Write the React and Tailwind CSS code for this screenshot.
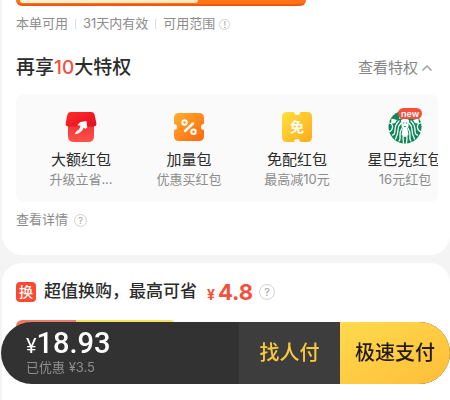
import React from 'react';

const RedPacketIcon = () => (
  <svg viewBox="0 0 34 34" className="size-[34px]" aria-hidden="true">
    <defs>
      <linearGradient id="packetBody" x1="0" y1="0" x2="0" y2="1">
        <stop offset="0" stopColor="#f5343a" />
        <stop offset="1" stopColor="#ff5248" />
      </linearGradient>
      <linearGradient id="packetLid" x1="0" y1="0" x2="1" y2="1">
        <stop offset="0" stopColor="#ff2c27" />
        <stop offset="1" stopColor="#e30d20" />
      </linearGradient>
    </defs>
    <path d="M4 15h26v11q0 6-6 6H10q-6 0-6-6z" fill="url(#packetBody)" />
    <path d="M7 2h20q3 0 3.700 3l1.600 8q.5 3.500-3 3.500H4.700q-3.500 0-3-3.500l1.600-8Q4 2 7 2z" fill="url(#packetLid)" />
    <path d="M10.500 24.300l2-3q3.500-2 4-5.500l-3.200-.6 3-3.200 6.200-1 .8 6.500-2.300 1.500-1-1.700q-2.500 6.500-9.500 7z" fill="#fff" />
  </svg>
);

const PercentIcon = () => (
  <svg viewBox="0 0 34 34" className="size-[34px]" aria-hidden="true">
    <defs>
      <linearGradient id="percentFill" x1="0" y1="0" x2="1" y2="1">
        <stop offset="0" stopColor="#ffb02b" />
        <stop offset="1" stopColor="#ff650f" />
      </linearGradient>
    </defs>
    <path d="M7 3h20q5 0 5 5v6a3 3 0 0 0 0 6v6q0 5-5 5H7q-5 0-5-5v-6a3 3 0 0 0 0-6V8q0-5 5-5z" fill="url(#percentFill)" />
    <g fill="none" stroke="#fff" strokeWidth="2" strokeLinecap="round">
      <circle cx="12.500" cy="12.500" r="2.200" />
      <circle cx="21.500" cy="21.700" r="2.200" />
      <path d="M21 13.500l-8 7.500" strokeWidth="2.400" />
    </g>
  </svg>
);

const FreeIcon = () => (
  <span className="relative flex size-[34px] items-center justify-center">
    <svg viewBox="0 0 34 34" className="absolute inset-0" aria-hidden="true">
      <defs>
        <linearGradient id="freeFill" x1="0" y1="0" x2="1" y2="1">
          <stop offset="0" stopColor="#ffe13d" />
          <stop offset="1" stopColor="#ffaa1c" />
        </linearGradient>
      </defs>
      <path d="M7 2h7a3 3 0 0 0 6 0h7q5 0 5 5v20q0 5-5 5h-7a3 3 0 0 0-6 0H7q-5 0-5-5V7q0-5 5-5z" fill="url(#freeFill)" />
    </svg>
    <span className="relative text-sm font-bold leading-none text-white">免</span>
  </span>
);

const StarbucksIcon = () => (
  <span className="relative block size-[34px]">
    <svg viewBox="0 0 34 34" className="size-[34px]" aria-hidden="true">
      <circle cx="17" cy="17" r="16.500" fill="#0d8757" />
      <g fill="none" stroke="#fff" strokeWidth="1.300" strokeLinecap="round">
        <path d="M13 13q-3 3-3 7t-2.500 9M11 11q-4 4-4 9t-2.500 5M14 18q-2.500 4-2 8t-1 5" />
        <path d="M21 13q3 3 3 7t2.500 9M23 11q4 4 4 9t2.500 5M20 18q2.500 4 2 8t1 5" />
        <path d="M1.500 13q3.500 1 3 4.500t-3 4M32.500 13q-3.500 1-3 4.500t3 4" />
        <path d="M15.500 24q-1 4 0 9M18.500 24q1 4 0 9" />
      </g>
      <path d="M13 10q4-3 8 0l-.5 6q-1.500 4-3.500 4t-3.500-4z" fill="#fff" />
      <path d="M14.500 19h5l1 6-3.500 2-3.500-2z" fill="#fff" />
      <path d="M11 9l1-4 3 2 2-4 2 4 3-2 1 4q-6-3-12 0z" fill="#fff" />
      <path d="M3.500 8.500l5.500 1.500-2 3-4 1zM30.500 8.500l-5.500 1.500 2 3 4 1z" fill="#fff" />
      <path d="M14.800 13h1.500M17.800 13h1.500M16 16.500h2" stroke="#0d8757" strokeWidth=".9" />
    </svg>
    <span className="absolute -top-0.5 left-2.5 rounded-full bg-[#f4503c] px-[3px] font-['Inter',sans-serif] text-[9px] font-semibold leading-[11px] text-white">
      new
    </span>
  </span>
);

const HintIcon = ({ mark, label, className }) => (
  <button
    type="button"
    aria-label={label}
    className={`flex items-center justify-center rounded-full border border-[#d2d2d2] leading-none text-[#a0a0a0] ${className}`}
  >
    {mark}
  </button>
);

const perks = [
  { title: '大额红包', desc: '升级立省...', Icon: RedPacketIcon },
  { title: '加量包', desc: '优惠买红包', Icon: PercentIcon },
  { title: '免配红包', desc: '最高减10元', Icon: FreeIcon },
  { title: '星巴克红包', desc: '16元红包', Icon: StarbucksIcon },
];

const MemberCard = () => (
  <section className="rounded-b-[20px] bg-white pb-[25px] pl-3.5 pr-3">
    <div className="h-1.5 w-[290px] overflow-hidden rounded-b-md border-b-2 border-[#f2570a] bg-[#ff7416] pl-1">
      <div className="h-[3px] w-[178px] rounded-b-sm bg-gradient-to-r from-[#fff3d9] to-[#ffe7c2]" />
    </div>
    <div className="mt-2 flex h-5 items-center text-[13px] text-[#8c8c8c]">
      <span>本单可用</span>
      <span className="mx-[7px] h-2.5 w-px bg-[#dcdcdc]" />
      <span>31天内有效</span>
      <span className="mx-[7px] h-2.5 w-px bg-[#dcdcdc]" />
      <span>可用范围</span>
      <HintIcon mark="!" label="可用范围说明" className="ml-1 size-[11px] text-[9px]" />
    </div>
    <div className="mt-5 flex h-7 items-center justify-between">
      <h2 className="text-[19px] font-medium text-[#2b2b2b]">
        再享<span className="text-[#f4503c]">10</span>大特权
      </h2>
      <button type="button" className="flex items-center gap-[3px] pr-[5px] text-[15px] text-[#858585]">
        查看特权
        <svg viewBox="0 0 12 8" className="h-2 w-3" fill="none" stroke="#a0a0a0" strokeWidth="1.500" aria-hidden="true">
          <path d="M1.500 6.500L6 2l4.500 4.500" />
        </svg>
      </button>
    </div>
    <ul className="mt-3 flex h-[108px] overflow-hidden rounded-lg bg-[#fafafa] pl-[11px] pt-4">
      {perks.map(({ title, desc, Icon }) => (
        <li key={title} className="flex w-[108px] shrink-0 flex-col items-center whitespace-nowrap">
          <Icon />
          <span className="mt-1.5 text-[15px] leading-5 text-[#2b2b2b]">{title}</span>
          <span className="text-[13px] leading-[18px] text-[#8c8c8c]">{desc}</span>
        </li>
      ))}
    </ul>
    <div className="mt-2 flex h-5 items-center text-[13px] text-[#8c8c8c]">
      查看详情
      <HintIcon mark="?" label="特权详情说明" className="ml-1.5 size-[13px] text-[9px]" />
    </div>
  </section>
);

const SwapCard = () => (
  <section className="mt-2 grow rounded-t-[20px] bg-white px-3.5 pt-[15px]">
    <div className="flex h-7 items-center">
      <span className="flex size-5 items-center justify-center rounded bg-[#fa4b32] text-sm font-medium leading-none text-white">
        换
      </span>
      <h2 className="ml-2 text-[17px] font-medium text-[#2b2b2b]">超值换购，最高可省</h2>
      <span className="ml-2.5 flex items-baseline gap-[3px] font-bold text-[#f4503c]">
        <span className="text-sm">¥</span>
        <span className="text-[22px] leading-7">4.8</span>
      </span>
      <HintIcon mark="?" label="换购说明" className="ml-1.5 size-4 text-[11px]" />
    </div>
    <div className="mt-3.5 flex h-10 w-40 overflow-hidden rounded-t-md">
      <div className="w-[60px] bg-[#f07a62]" />
      <div className="flex-1 bg-[#f5e05a]" />
    </div>
  </section>
);

const PayBar = () => (
  <footer className="fixed inset-x-0 bottom-4 ml-px flex h-[62px] overflow-hidden rounded-full bg-[#323232]">
    <div className="flex-1 pl-[25px] pt-1.5">
      <div className="flex h-[30px] items-baseline font-['Roboto','Noto_Sans_CJK_SC',sans-serif] text-white">
        <span className="text-xl leading-[30px]">¥</span>
        <span className="text-[29px] font-medium leading-[30px]">18.93</span>
      </div>
      <div className="text-[13px] leading-[18px] text-[#8e8e8e]">已优惠 ¥3.5</div>
    </div>
    <button type="button" className="w-[101px] bg-[#3d3d3d] text-xl font-medium text-[#f8c93c]">
      找人付
    </button>
    <button
      type="button"
      className="w-[110px] bg-gradient-to-br from-[#ffda4d] to-[#ffbd38] text-xl font-medium text-[#241c12]"
    >
      极速支付
    </button>
  </footer>
);

const App = () => (
  <main className="flex min-h-screen flex-col bg-[#f4f4f4] pl-0.5 font-['Inter','Noto_Sans_CJK_SC',sans-serif]">
    <MemberCard />
    <SwapCard />
    <PayBar />
  </main>
);

export default App;
